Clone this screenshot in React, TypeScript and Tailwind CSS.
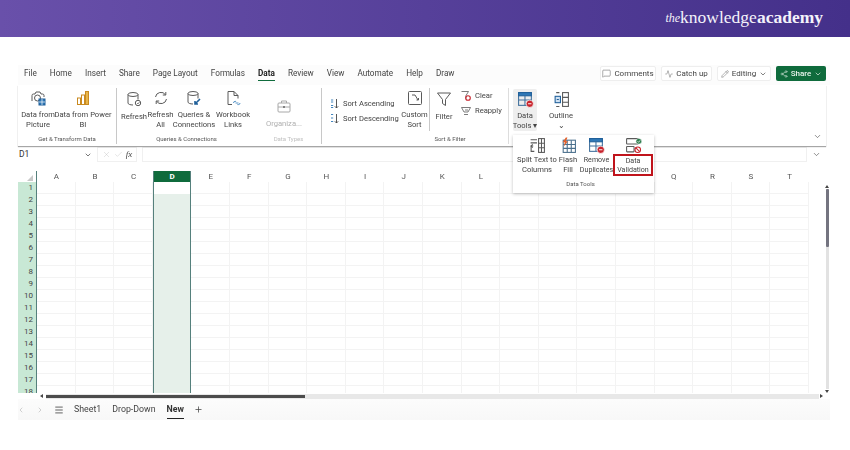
import React from 'react';
import { ChevronDown, ChevronLeft, ChevronRight, Menu, MessageSquare, Pencil, Plus, Share2, X, Check, Activity } from 'lucide-react';

const FONT = "font-['Roboto','Noto_Sans',sans-serif]";
const GRAY = '#5a5a5a';

function Ico({ size = 16, children }: { size?: number; children: React.ReactNode }) {
  return (
    <svg width={size} height={size} viewBox="0 0 16 16" fill="none" stroke={GRAY} strokeWidth="1">
      {children}
    </svg>
  );
}

const Cylinder = () => (
  <>
    <ellipse cx="7" cy="3.5" rx="5" ry="2" />
    <path d="M2 3.5v8.5c0 1.2 2.2 2 5 2M12 3.5v5" />
  </>
);

const icons: Record<string, React.ReactNode> = {
  picture: (
    <Ico>
      <path d="M2 11V5.5a1.5 1.5 0 0 1 1.5-1.5H5l1-2h4l1 2h1.5A1.5 1.5 0 0 1 14 5.5V7" />
      <circle cx="7.5" cy="8" r="3" />
      <rect x="9" y="9" width="6" height="6" fill="#2f78b7" stroke="#1f5f99" />
      <path d="M9 12h6M12 9v6" stroke="#fff" strokeWidth=".7" />
    </Ico>
  ),
  powerbi: (
    <Ico>
      <g stroke="#c98a20">
        <rect x="2.5" y="8" width="3" height="6.5" />
        <rect x="6.5" y="5" width="3" height="9.5" />
        <rect x="10.5" y="1.5" width="3" height="13" fill="#e8b64c" />
      </g>
    </Ico>
  ),
  refresh: (
    <Ico>
      <Cylinder />
      <circle cx="12" cy="12" r="2.7" />
      <path d="M11 12l1 1 1.5-2" strokeWidth=".7" />
    </Ico>
  ),
  refreshAll: (
    <Ico>
      <path d="M2.5 7a5.5 5.5 0 0 1 10-2.2M13.5 9a5.5 5.5 0 0 1-10 2.2" />
      <path d="M12.8 2v3h-3M3.2 14v-3h3" />
    </Ico>
  ),
  queries: (
    <Ico>
      <Cylinder />
      <path d="M14 9l-5 5M9 11v3h3" stroke="#1f5f99" strokeWidth="1.6" />
    </Ico>
  ),
  links: (
    <Ico>
      <path d="M3 14.5V1.5h6l4 4v3M3 14.5h4M9 1.5v4h4" />
      <path d="M8.5 13a1.6 1.6 0 0 1 1.6-1.6h1M15 13a1.6 1.6 0 0 1-1.6 1.6h-1M10.5 13h3" stroke="#2f78b7" strokeWidth=".8" />
    </Ico>
  ),
  organize: (
    <Ico>
      <g stroke="#a8a8a8">
        <rect x="2" y="5" width="12" height="9" rx="1" />
        <path d="M5.5 5V3h5v2M2 9h12" />
        <path d="M7 9h2" stroke="#666" strokeWidth="1.6" />
      </g>
    </Ico>
  ),
  customSort: (
    <Ico>
      <rect x="1.5" y="1.5" width="13" height="13" rx="1" />
      <path d="M5 5h3l3 5M9.5 10H11.5V8" />
    </Ico>
  ),
  filter: (
    <Ico>
      <path d="M1.5 2h13l-5 6.5v6l-3-2V8.5z" />
    </Ico>
  ),
  dataTools: (
    <Ico size={17}>
      <rect x="1.5" y="1.5" width="12" height="12" stroke="#3f6f9c" />
      <rect x="1.5" y="1.5" width="12" height="3" fill="#2f78b7" stroke="#1f5f99" />
      <path d="M1.5 8.5h12M7.5 4.5v9" stroke="#3f6f9c" />
      <circle cx="12" cy="12" r="3.4" fill="#c8232c" stroke="#fff" strokeWidth=".6" />
      <path d="M10.4 12h3.2" stroke="#fff" strokeWidth=".9" />
    </Ico>
  ),
  outline: (
    <Ico size={17}>
      <rect x="9" y="1.5" width="5.5" height="13" />
      <path d="M9 6h5.5M9 10.5h5.5M3 1.5h3M3 14.5h3" />
      <rect x="2" y="5" width="5" height="6" fill="#cfe1f2" stroke="#1f5f99" />
      <path d="M3.5 8h2" stroke="#1f5f99" />
    </Ico>
  ),
  split: (
    <Ico size={17}>
      <path d="M1.5 2.5h6M1.5 5.5h6M4 8.5H2v5h3" />
      <path d="M3.5 7l-1.5 1.5L3.500 10" />
      <rect x="9" y="1.500" width="5.500" height="13" />
      <path d="M11.750 1.500v13M9 5.800h5.500M9 10.200h5.500" />
    </Ico>
  ),
  flash: (
    <Ico size={17}>
      <rect x="3" y="3" width="11.500" height="11.500" stroke="#4a6f8c" />
      <path d="M3 7h11.500M3 10.700h11.500M6.800 3v11.500M10.600 3v11.500" stroke="#4a6f8c" />
      <path d="M5.500 .5L2.500 5h2l-1 4 4-5H5.500l1.500-3.500z" fill="#e2602a" stroke="none" />
    </Ico>
  ),
  validation: (
    <Ico size={17}>
      <rect x="1.500" y="1.500" width="11" height="5" rx=".5" />
      <rect x="1.500" y="9" width="7" height="5" rx=".5" />
      <circle cx="13" cy="4" r="2.700" fill="#2e7d4f" stroke="#fff" strokeWidth=".5" />
      <path d="M11.800 4l1 1 1.400-1.800" stroke="#fff" strokeWidth=".7" />
      <circle cx="12" cy="12" r="2.600" stroke="#c8232c" />
      <path d="M10.200 10.200l3.600 3.600" stroke="#c8232c" />
    </Ico>
  ),
};

function RibbonBtn({ w, icon, lines, dim, on, low }: { w: string; icon: string; lines: string[]; dim?: boolean; on?: boolean; low?: boolean }) {
  return (
    <div className={`${w} flex flex-col items-center shrink-0 h-[42px] ${low ? 'pt-[8px]' : 'pt-[1px]'} ${on ? 'bg-[#eeeeee] rounded-[2px]' : ''}`}>
      <div className="h-[20px] flex items-center">{icons[icon]}</div>
      <div className={`mt-[3px] text-[7.6px] leading-[10px] text-center whitespace-nowrap ${dim ? 'text-[#b0b0b0]' : 'text-[#444]'}`}>
        {lines.map((l) => (
          <div key={l}>{l}</div>
        ))}
      </div>
    </div>
  );
}

function Group({ w, label, dim, line, children }: { w: string; label: string; dim?: boolean; line?: boolean; children: React.ReactNode }) {
  return (
    <div className={`${w} shrink-0 flex flex-col h-[56px] mt-[3px] ${line ? 'border-r border-[#c8c8c8]' : ''}`}>
      <div className="h-[42px] flex">{children}</div>
      <div className={`mt-[5px] text-center text-[6px] leading-[8px] ${dim ? 'text-[#c0c0c0]' : 'text-[#555]'}`}>{label}</div>
    </div>
  );
}

function SortRow({ text, flip }: { text: string; flip?: boolean }) {
  return (
    <div className="flex items-center h-[15px] gap-[4px] text-[7.6px] text-[#444] whitespace-nowrap">
      <svg width="9" height="11" viewBox="0 0 9 11" fill="none" stroke="#444" strokeWidth=".9">
        <path d="M6.500 1v9M4.800 8.300l1.700 1.700 1.700-1.700" />
        <path d={flip ? 'M1 1.500h2.200M1 8.500h2.200M1 5h2.200' : 'M1 2h2.200M1 4h2.200M1 7.500h2.200M1 9.500h2.200'} stroke="#2f78b7" />
      </svg>
      {text}
    </div>
  );
}

function Pill({ children, w }: { children: React.ReactNode; w: string }) {
  return (
    <div className={`${w} h-[15px] bg-white border border-[#eeeeee] rounded-[2px] flex items-center justify-center gap-[3px] text-[8px] text-[#444] whitespace-nowrap`}>
      {children}
    </div>
  );
}

const menuItems = ['File', 'Home', 'Insert', 'Share', 'Page Layout', 'Formulas', 'Data', 'Review', 'View', 'Automate', 'Help', 'Draw'];

const columns = 'ABCDEFGHIJKLMNOPQRST'.split('');
const rows = Array.from({ length: 18 }, (_, i) => i + 1);

function Column({ name }: { name: string }) {
  const sel = name === 'D';
  return (
    <div className={`w-[38.6px] shrink-0 relative ${sel ? 'border-x border-[#55807c]' : ''}`}>
      {sel && (
        <>
          <span className="absolute left-[-3px] top-[-5px] w-[3px] h-[3px] rounded-full border-[0.5px] border-[#777]" />
          <span className="absolute right-[-3px] top-[-5px] w-[3px] h-[3px] rounded-full border-[0.5px] border-[#777]" />
        </>
      )}
      <div className={`h-[11px] flex items-center justify-center text-[8px] leading-none ${sel ? 'bg-[#0f6b3c] text-white font-bold' : 'text-[#555]'}`}>{name}</div>
      {rows.map((r) => (
        <div
          key={r}
          className={`h-[12px] ${sel ? (r === 1 ? 'bg-white' : 'bg-[#e6f0ea]') : 'border-b border-r border-[#f3f3f3]'}`}
        />
      ))}
    </div>
  );
}

export default function App() {
  return (
    <div className={`w-[850px] h-[450px] bg-white overflow-hidden ${FONT}`}>
      {/* brand bar */}
      <div className="h-[37px] bg-gradient-to-r from-[#6950aa] to-[#44308a] flex items-center justify-end pr-[27px] font-['Liberation_Serif',serif] text-[#f4f2fa] text-[17.5px] leading-none pb-[2px]">
        <span className="italic text-[12px]">the</span>
        <span>knowledge</span>
        <span className="font-bold">academy</span>
      </div>

      <div className="ml-[18px] mt-[28px] w-[812px] h-[355px] relative blur-[0.3px]">
        {/* menu row */}
        <div className="h-[20px] flex items-start pt-[1px] text-[8.2px] leading-[15px] text-[#444] bg-[#fcfcfc] pl-[6px] gap-[13px] pr-[4px]">
          {menuItems.map((m) => (
            <div key={m} className={`relative whitespace-nowrap ${m === 'Data' ? 'font-bold text-[#222]' : ''}`}>
              {m}
              {m === 'Data' && <span className="absolute left-0 right-0 bottom-0 h-[1px] bg-[#0f6b3c]" />}
            </div>
          ))}
          <div className="ml-auto flex gap-[5px]">
            <Pill w="w-[56px]">
              <MessageSquare size={9} strokeWidth={1.2} />
              Comments
            </Pill>
            <Pill w="w-[51px]">
              <Activity size={8} strokeWidth={1.2} />
              Catch up
            </Pill>
            <Pill w="w-[54px]">
              <Pencil size={8} strokeWidth={1.2} />
              Editing
              <ChevronDown size={8} />
            </Pill>
            <div className="w-[50px] h-[15px] bg-[#0f6b3c] rounded-[2px] flex items-center justify-center gap-[3px] text-[8px] font-medium text-[#e8f3ec]">
              <Share2 size={8} strokeWidth={1.4} />
              Share
              <ChevronDown size={8} />
            </div>
          </div>
        </div>

        {/* ribbon */}
        <div className="h-[61px] w-[808px] flex bg-white shadow-[0_1px_1px_rgba(0,0,0,0.35)] relative">
          <Group w="w-[99px]" label="Get & Transform Data" line>
            <RibbonBtn w="w-[40px]" icon="picture" lines={['Data from', 'Picture']} />
            <RibbonBtn w="w-[50px]" icon="powerbi" lines={['Data from Power', 'BI']} />
          </Group>
          <Group w="w-[139px]" label="Queries & Connections">
            <div className="w-[3px] shrink-0" />
            <RibbonBtn w="w-[28px]" icon="refresh" lines={['Refresh']} />
            <RibbonBtn w="w-[25px]" icon="refreshAll" lines={['Refresh', 'All']} />
            <RibbonBtn w="w-[42px]" icon="queries" lines={['Queries &', 'Connections']} />
            <RibbonBtn w="w-[36px]" icon="links" lines={['Workbook', 'Links']} />
          </Group>
          <Group w="w-[66px]" label="Data Types" dim line>
            <RibbonBtn w="w-[56px]" icon="organize" lines={['Organiza...']} dim low />
          </Group>
          <div className="w-[187px] shrink-0 flex flex-col h-[56px] mt-[3px] border-r border-[#dddddd]">
            <div className="h-[46px] flex">
              <div className="w-[80px] pl-[8px] pt-[8px] shrink-0">
                <SortRow text="Sort Ascending" />
                <SortRow text="Sort Descending" flip />
              </div>
              <RibbonBtn w="w-[25px]" icon="customSort" lines={['Custom', 'Sort']} />
              <div className="w-[1px] h-[43px] bg-[#c8c8c8] ml-[2px] shrink-0" />
              <RibbonBtn w="w-[28px]" icon="filter" lines={['Filter']} />
              <div className="pl-[3px] text-[7.6px] text-[#444] leading-[15px] shrink-0">
                <div className="flex items-center gap-[4px]">
                  <svg width="10" height="10" viewBox="0 0 10 10" fill="none" stroke={GRAY} strokeWidth=".8">
                    <path d="M.5 .5h7L5 4.500v3" />
                    <circle cx="7" cy="7" r="2.300" stroke="#c8232c" strokeWidth="1.100" />
                  </svg>
                  Clear
                </div>
                <div className="flex items-center gap-[4px]">
                  <svg width="10" height="10" viewBox="0 0 10 10" fill="none" stroke={GRAY} strokeWidth=".8">
                    <path d="M.5 1.500h9L7 6H3z" />
                    <path d="M4 4h3M3 8.500h4" />
                  </svg>
                  Reapply
                </div>
              </div>
            </div>
            <div className="mt-[1px] text-center text-[6px] leading-[8px] text-[#555] pl-[70px]">Sort & Filter</div>
          </div>
          <div className="ml-[4px] mt-[4px] flex">
            <RibbonBtn w="w-[24px]" icon="dataTools" lines={['Data', 'Tools ▾']} on />
            <div className="ml-[8px]">
              <RibbonBtn w="w-[32px]" icon="outline" lines={['Outline', '⌄']} />
            </div>
          </div>
          <ChevronDown size={9} strokeWidth={1.6} className="absolute right-[4px] bottom-[5px] text-[#444]" />
        </div>

        {/* formula bar */}
        <div className="h-[20px] mt-[1px] w-[808px] flex items-start text-[8.5px] text-[#333] pr-[5px]">
          <div className="w-[77px] h-[15px] flex items-center justify-between pl-[1px] pr-[3px] bg-white">
            D1
            <ChevronDown size={8} />
          </div>
          <div className="ml-[2px] w-[40px] h-[15px] border border-[#f0f0f0] bg-white flex items-center justify-center gap-[3px] text-[#bbb]">
            <X size={9} strokeWidth={1} />
            <Check size={9} strokeWidth={1} />
            <span className="font-['Liberation_Serif',serif] italic text-[9px] text-[#444]">fx</span>
          </div>
          <div className="ml-[5px] flex-1 h-[15px] border border-[#f0f0f0] bg-white" />
          <ChevronDown size={9} strokeWidth={1.6} className="ml-[5px] mt-[3px] text-[#444]" />
        </div>

        {/* sheet grid */}
        <div className="flex h-[222px] mt-[4px]">
          <div className="flex-1 flex overflow-hidden">
            <div className="w-[19px] shrink-0 border-r border-[#55807c]">
              <div className="h-[11px] flex justify-end items-end pr-[3px] pb-[1px] bg-white">
                <span className="w-0 h-0 border-l-[6px] border-l-transparent border-b-[6px] border-b-[#c8c8c8]" />
              </div>
              {rows.map((r) => (
                <div key={r} className="h-[12px] bg-[#c8e8d5] text-[8px] leading-[12px] text-right pr-[3px] text-[#444]">
                  {r}
                </div>
              ))}
            </div>
            {columns.map((c) => (
              <Column key={c} name={c} />
            ))}
          </div>
          <div className="w-[9px] shrink-0 flex flex-col items-center pl-[3px] pt-[14px] bg-white">
            <span className="w-0 h-0 border-x-[2.500px] border-x-transparent border-b-[3px] border-b-[#444]" />
            <div className="w-[3px] mt-[1px] flex-1 bg-[#e2e2e2] flex flex-col">
              <div className="h-[58px] bg-[#747480] rounded-[1px]" />
            </div>
            <span className="w-0 h-0 border-x-[2.500px] border-x-transparent border-t-[3px] border-t-[#444] mt-[1px]" />
          </div>
        </div>

        {/* horizontal scrollbar */}
        <div className="h-[6px] flex items-center w-[805px] pl-[22px]">
          <span className="w-0 h-0 border-y-[2.500px] border-y-transparent border-r-[3px] border-r-[#444]" />
          <div className="ml-[3px] flex-1 h-[5px] bg-[#e8e8e8] flex items-center">
            <div className="w-[259px] h-[3px] bg-[#4c4c4c]" />
          </div>
          <span className="ml-[1px] w-0 h-0 border-y-[2.500px] border-y-transparent border-l-[3px] border-l-[#444]" />
        </div>

        {/* sheet tabs */}
        <div className="h-[21px] w-[812px] flex items-center bg-gradient-to-b from-[#fcfcfc] to-[#f8f8f8] text-[8.8px] text-[#444]">
          <ChevronLeft size={8} className="ml-[-1px] text-[#bbb]" />
          <ChevronRight size={8} className="ml-[11px] text-[#bbb]" />
          <Menu size={10} className="ml-[10px] text-[#444]" />
          <span className="ml-[10px]">Sheet1</span>
          <span className="ml-[11px]">Drop-Down</span>
          <span className="ml-[11px] relative self-stretch flex items-center font-bold text-[#333]">
            New
            <span className="absolute left-0 right-0 bottom-[1px] h-[1px] bg-[#222]" />
          </span>
          <Plus size={9} className="ml-[10px] text-[#444]" />
        </div>

        {/* Data Tools flyout */}
        <div className="absolute left-[495px] top-[70px] w-[141px] h-[58px] bg-white shadow-[0_1px_3px_rgba(0,0,0,0.25)] flex flex-col items-center pt-[2px]">
          <div className="flex w-full pl-[2px] h-[41px]">
            <div className="w-[44px] flex flex-col items-center">
              {icons.split}
              <div className="mt-[1px] text-[7.6px] leading-[10px] text-center text-[#444] whitespace-nowrap">Split Text to<br />Columns</div>
            </div>
            <div className="w-[18px] flex flex-col items-center">
              {icons.flash}
              <div className="mt-[1px] text-[7.6px] leading-[10px] text-center text-[#444]">Flash<br />Fill</div>
            </div>
            <div className="w-[33px] ml-[3px] flex flex-col items-center">
              {icons.dataTools}
              <div className="mt-[1px] text-[7.1px] leading-[10px] text-center text-[#444]">Remove<br />Duplicates</div>
            </div>
            <div className="w-[40px] flex flex-col items-center">
              {icons.validation}
              <div className="w-[40px] h-[22px] border-2 border-[#c0141c] flex items-center justify-center text-[7.1px] leading-[9.500px] text-center text-[#444]">Data<br />Validation</div>
            </div>
          </div>
          <div className="mt-[2px] text-[6px] leading-[8px] text-[#555] pr-[6px]">Data Tools</div>
        </div>
      </div>
    </div>
  );
}
